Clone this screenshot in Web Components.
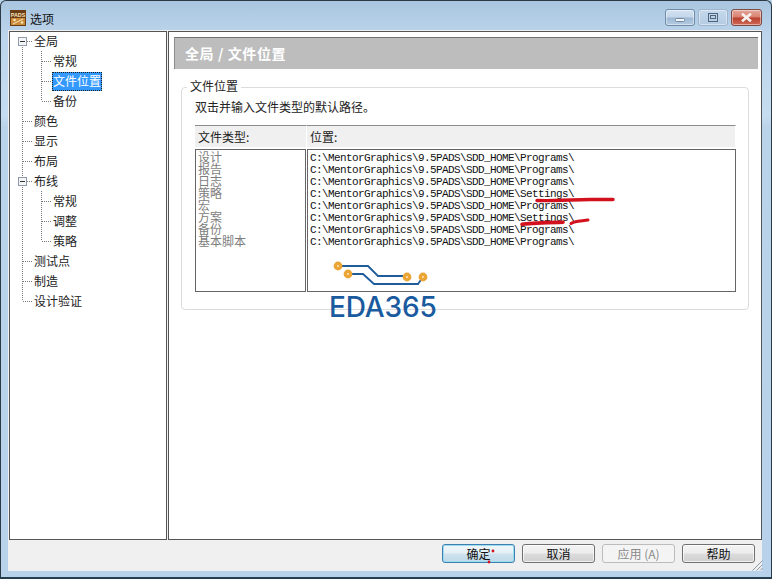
<!DOCTYPE html>
<html><head><meta charset="utf-8">
<style>
html,body{margin:0;padding:0;width:772px;height:579px;overflow:hidden;background:#b9d3ea}
body{font:12px "Noto Sans CJK SC","Liberation Sans",sans-serif;color:#222}
</style></head><body>
<options-window></options-window>
<script>
const F='"Noto Sans CJK SC","Liberation Sans",sans-serif';
function def(name,css,html){
  customElements.define(name,class extends HTMLElement{
    connectedCallback(){
      if(this.shadowRoot)return;
      const s=this.attachShadow({mode:'open'});
      s.innerHTML='<style>'+css+'</style>'+(typeof html==='function'?html(this):html);
    }
  });
}
def('caption-btn',`:host{height:17px;box-sizing:border-box;border:1px solid #6f8ba8;border-radius:3px;background:linear-gradient(#d3e2f1 0,#c4d6ea 48%,#9fb8d3 52%,#b3cbe2 100%);display:flex;align-items:center;justify-content:center;box-shadow:inset 0 0 0 1px rgba(255,255,255,.45)}
:host([kind=max]){border-color:#9db5ce;background:linear-gradient(#c6d9ec,#b4cbe2)}
:host([kind=close]){border-color:#7d4a44;background:linear-gradient(#e3a79b 0,#d9806f 48%,#b8402f 52%,#cf6a55 100%)}`,
(h)=>{const k=h.getAttribute('kind');
 if(k==='min')return '<svg width="10" height="4" viewBox="0 0 10 4" style="margin-top:6px"><rect x=".5" y=".5" width="9" height="3" rx="1" fill="#f4f7fa" stroke="#6f88a2"/></svg>';
 if(k==='max')return '<svg width="10" height="9" viewBox="0 0 10 9"><rect x=".5" y=".5" width="9" height="8" fill="none" stroke="#4f6680"/><rect x="2.5" y="2.5" width="5" height="3" fill="none" stroke="#4f6680"/></svg>';
 return '<svg width="11" height="9" viewBox="0 0 11 9"><path d="M2 1.5 9 7.5M9 1.5 2 7.5" stroke="#f6f0ee" stroke-width="2.6" stroke-linecap="square"/></svg>';});

def('title-bar',`:host{display:flex;align-items:center;height:29px;padding:5px 0 0 9px;box-sizing:border-box;font:12px ${F};color:#111}
svg{margin-right:4px;flex:none}.t{flex:1}.b{display:flex;gap:3px;margin:-2px 9px 0 0}
caption-btn{width:30px}caption-btn:nth-child(3){width:31px}`,
`<svg width="16" height="16" viewBox="0 0 16 16"><rect width="16" height="16" fill="#6b3d15"/><rect x="1" y="8" width="14" height="7" fill="#c98a3a"/><text x="8" y="6.5" text-anchor="middle" font-family="Liberation Sans" font-weight="700" font-size="5.4" fill="#f6e3bd">PADS</text><path d="M3 14 13 9" stroke="#f7e5bd"/><circle cx="4.5" cy="10" r="1.3" fill="#f7e5bd"/><circle cx="12" cy="12.5" r="1.3" fill="#f7e5bd"/></svg><span class="t">选项</span><span class="b"><caption-btn kind="min"></caption-btn><caption-btn kind="max"></caption-btn><caption-btn kind="close"></caption-btn></span>`);

def('tree-row',`:host{display:flex;height:20px;align-items:center;font:12px/20px ${F};color:#222;white-space:nowrap}
svg{flex:none;display:block}
.l{height:19px;line-height:17px;box-sizing:border-box}
:host([selected]) .l{background:#3399ff;color:#fff;outline:1px dotted #222;outline-offset:-1px;padding:0 1px;margin:1px 0 0 -1px;line-height:17px}`,
(h)=>{
 const lvl=+h.getAttribute('level')||0,last=h.hasAttribute('last'),exp=h.hasAttribute('expanded');
 const dot='stroke="#7a7a7a" stroke-dasharray="1 1" shape-rendering="crispEdges"';
 let p='';
 if(lvl===0){
  p+=`<path d="M12.5 ${h.hasAttribute('first')?10:0}V${last?10:20}" ${dot}/>`;
  p+=`<path d="M13 10.5H22" ${dot}/>`;
  if(exp)p+=`<rect x="8.5" y="6.5" width="8" height="8" fill="#f3f5f8" stroke="#8f9aa8"/><path d="M10 10.5h5" stroke="#333"/>`;
 }else{
  p+=`<path d="M12.5 0V20" ${dot}/>`;
  p+=`<path d="M31.5 0V${last?10:20}" ${dot}/><path d="M32 10.5H41" ${dot}/>`;
 }
 return `<svg width="${lvl?43:24}" height="20" viewBox="0 0 ${lvl?43:24} 20">${p}</svg><span class="l"><slot></slot></span>`;});

def('options-tree',`:host{display:block;flex:none;width:158px;box-sizing:border-box;background:#fff;border:1px solid #555}
::slotted(:first-child){margin-top:-1px}`,`<slot></slot>`);

def('section-head',`:host{display:block;height:32px;box-sizing:border-box;margin:5px 3px 0 5px;background:#bdbdbd;border-top:1px solid #707070;border-left:1px solid #8a8a8a;color:#fff;font:bold 14px/30px ${F};padding-left:10px;letter-spacing:.6px}`,`<slot></slot>`);

def('group-box',`:host{display:block;position:relative;box-sizing:border-box;height:223px;margin:18px 12px 0 12px;border:1px solid #dcdcdc;border-radius:4px;padding:11px 12px 0 13px;font:12px ${F};color:#222}
.lg{position:absolute;left:5px;top:-10px;background:#fff;padding:0 3px;height:16px;line-height:16px}
.d{height:15px;line-height:15px;margin-bottom:11px}`,
`<span class="lg">文件位置</span><div class="d">双击并输入文件类型的默认路径。</div><slot></slot>`);

def('path-table',`:host{display:grid;grid-template-columns:112px 429px;grid-template-rows:22px 143px;row-gap:2px;font:12px ${F}}
.h{background:#f0f0f0;border-top:1px solid #8c8c8c;color:#222;padding-left:3px;line-height:21px;border-right:1px solid #fff;box-sizing:border-box}
.b{border:1px solid #666;box-sizing:border-box;background:#fff;overflow:hidden}
.types{color:#7d7d7d;padding:1px 0 0 2px;margin-right:1px}
.types div{height:12px;line-height:12px;white-space:nowrap}
.paths{padding:2px 0 0 2px;font:11px/12px "Liberation Mono",monospace;letter-spacing:-.6px;color:#111}
.paths div{height:12px;white-space:nowrap}`,
()=>{
 const pr='C:\\MentorGraphics\\9.5PADS\\SDD_HOME\\Programs\\',st='C:\\MentorGraphics\\9.5PADS\\SDD_HOME\\Settings\\';
 const ps=[pr,pr,pr,st,pr,st,pr,pr].map(x=>`<div>${x}</div>`).join('');
 const ts=['设计','报告','日志','策略','宏','方案','备份','基本脚本'].map(x=>`<div>${x}</div>`).join('');
 return `<div class="h">文件类型:</div><div class="h">位置:</div><div class="b types">${ts}</div><div class="b paths">${ps}</div>`;});

def('wm-logo',`:host{display:block;position:absolute;left:324px;top:254px;width:125px;height:70px;pointer-events:none}
svg{position:absolute;left:0;top:0}
.t{position:absolute;left:4px;top:36px;font:500 28px/32px Inter,"Liberation Sans",sans-serif;color:#1a5a9e;letter-spacing:-.1px;white-space:nowrap}`,
`<svg width="125" height="45" viewBox="0 0 125 45"><g fill="none" stroke="#1f5c9c" stroke-width="1.8"><path d="M13 11H43L53 21H78"/><path d="M23 19H38L49 29H93L98 22"/></g><g fill="#fbe6c0" stroke="#eba535" stroke-width="3.4"><circle cx="13" cy="11" r="2.7"/><circle cx="23" cy="19" r="2.7"/><circle cx="82" cy="22" r="2.7"/><circle cx="98" cy="22" r="2.7"/></g></svg><span class="t">EDA365</span>`);

def('red-marks',`:host{display:block;position:absolute;left:-1px;top:-1px;width:772px;height:579px;pointer-events:none}`,
`<svg width="772" height="579" viewBox="0 0 772 579"><g fill="none" stroke="#d2111c" stroke-linecap="round"><path d="M537 200.5C555 201 575 200 590 199.5L613 199.5" stroke-width="3.4"/><path d="M522 224.3C535 222.5 550 222.5 563 222.3" stroke-width="3.6"/><path d="M571 223.5C574 221 582 221 588 220" stroke-width="3"/></g><circle cx="493" cy="551" r="1.4" fill="#d2111c"/><circle cx="489" cy="562" r="1.4" fill="#d2111c"/></svg>`);

def('dlg-btn',`:host{display:flex;align-items:center;justify-content:center;width:73px;height:19px;box-sizing:border-box;border:1px solid #707070;border-radius:3px;background:linear-gradient(#f4f4f4 0,#ececec 48%,#dcdcdc 52%,#cfcfcf 100%);font:12px ${F};color:#111;box-shadow:inset 0 0 0 1px rgba(255,255,255,.7)}
:host([default]){border-color:#3c7fb1;box-shadow:inset 0 0 0 1px #9fdcf0;background:linear-gradient(#f0f7fb 0,#e4f0f6 48%,#cfe3ee 52%,#bcd9e8 100%)}
:host([disabled]){border-color:#bcbcbc;background:#f4f4f4;color:#8a8a8a;box-shadow:none}`,`<slot></slot>`);

def('options-window',`:host{display:block;position:relative;width:772px;height:579px;box-sizing:border-box;border:1px solid #2b3a44;border-bottom:2px solid #24404f;border-radius:6px 6px 0 0;background:linear-gradient(#a9c5df 0,#bcd5ec 6%,#c6dcf0 20%,#b9d3ea 22%,#b7d2ea 100%);overflow:hidden}
.client{margin:0 9px 0 7px;height:541px;background:#f0f0f0;box-sizing:border-box;padding:1px 0 0 1px;display:flex;flex-direction:column}
.panes{display:flex;height:509px;gap:1px}
.right{flex:1;min-width:0;background:#fff;border:1px solid #555;box-sizing:border-box}
.foot{display:flex;justify-content:flex-end;gap:7px;padding:4px 7px 0 0}
.grip{position:absolute;right:8px;bottom:6px}`,
`<title-bar></title-bar><div class="client"><div class="panes"><options-tree>
<tree-row first expanded>全局</tree-row>
<tree-row level="1">常规</tree-row>
<tree-row level="1" selected>文件位置</tree-row>
<tree-row level="1" last>备份</tree-row>
<tree-row>颜色</tree-row><tree-row>显示</tree-row><tree-row>布局</tree-row>
<tree-row expanded>布线</tree-row>
<tree-row level="1">常规</tree-row><tree-row level="1">调整</tree-row><tree-row level="1" last>策略</tree-row>
<tree-row>测试点</tree-row><tree-row>制造</tree-row><tree-row last>设计验证</tree-row>
</options-tree><div class="right"><section-head>全局 / 文件位置</section-head><group-box><path-table></path-table></group-box></div></div>
<div class="foot"><dlg-btn default>确定</dlg-btn><dlg-btn>取消</dlg-btn><dlg-btn disabled>应用 (A)</dlg-btn><dlg-btn>帮助</dlg-btn></div></div>
<svg class="grip" width="11" height="11" viewBox="0 0 11 11"><path d="M10.5 .5 .5 10.5M10.5 4.5 4.5 10.5M10.5 8 8 10.5" stroke="#8a9aa8" fill="none"/></svg>
<wm-logo></wm-logo><red-marks></red-marks>`);
</script>
</body></html>
